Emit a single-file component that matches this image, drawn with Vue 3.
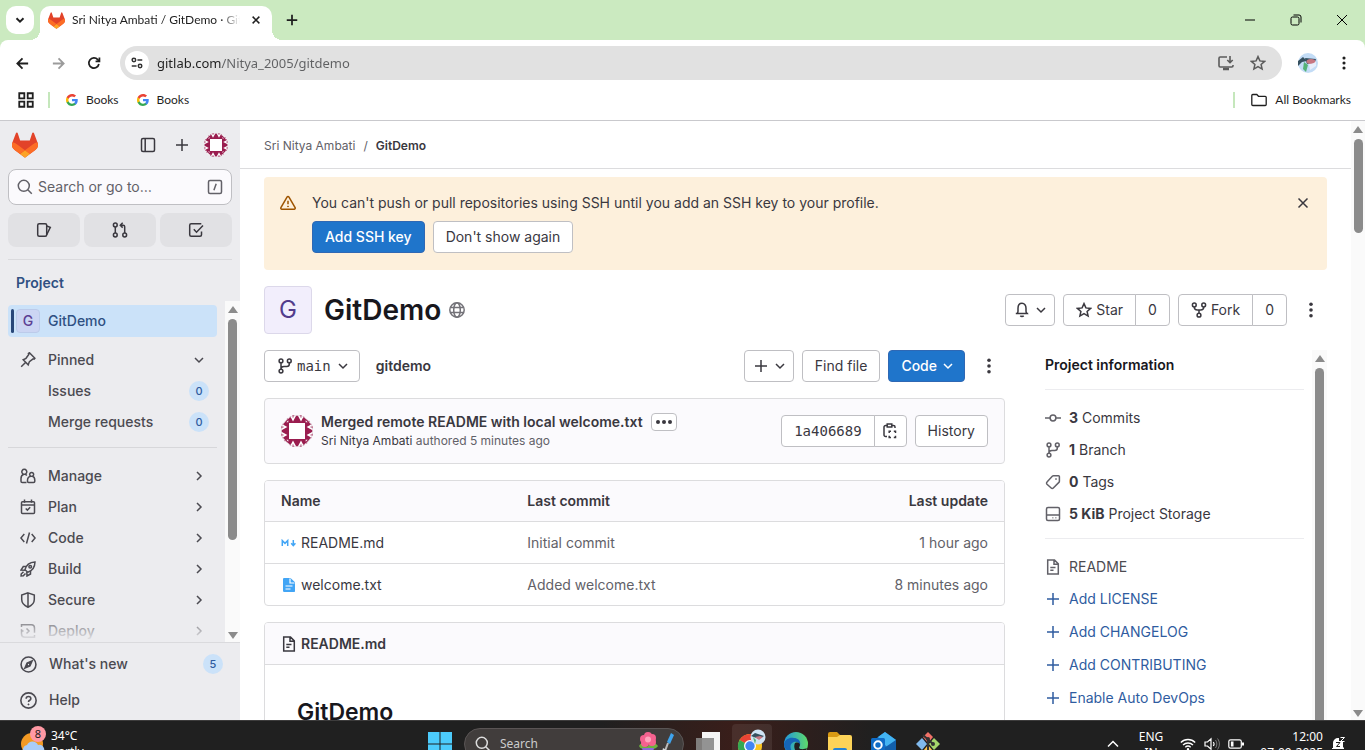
<script setup>
import { h } from 'vue'

const glyphs = {
  chevronDown: '<path d="m4 6 4 4 4-4"/>',
  chevronRight: '<path d="m6 4 4 4-4 4"/>',
  chevronUp: '<path d="m3 10.500 5-5 5 5"/>',
  close: '<path d="m3.500 3.500 9 9m0-9-9 9"/>',
  plus: '<path d="M8 2v12M2 8h12"/>',
  back: '<path d="M14 8H2.500M8 2.500 2.500 8 8 13.500"/>',
  forward: '<path d="M2 8h11.500M8 2.500 13.500 8 8 13.500"/>',
  reload: '<path d="M13.600 9.200A5.800 5.800 0 1 1 12.300 4.200L14 6"/><path d="M14.200 1.800V6.200H9.800"/>',
  tune: '<path d="M1.500 4.500h.1M8.500 4.500H14M2 11.500h5.500"/><circle cx="4.500" cy="4.500" r="2"/><circle cx="11.500" cy="11.500" r="2"/>',
  install: '<path d="M9 2H2.200C1.500 2 1 2.500 1 3.200v7.600c0 .7.500 1.200 1.200 1.200h11.600c.7 0 1.200-.5 1.200-1.200V10M12 1v6.500M9.300 5 12 7.700 14.700 5"/><path d="M5 14h6" stroke-width="2.500"/>',
  star: '<path d="m8 1.600 1.900 4.300 4.700.5-3.500 3.100 1 4.600L8 11.700l-4.100 2.400 1-4.600-3.500-3.100 4.700-.5z"/>',
  grid: '<path d="M2 2h4.500v4.500H2zM9.500 2H14v4.500H9.500zM2 9.500h4.500V14H2zM9.500 9.500H14V14H9.500z"/>',
  folder: '<path d="M.8 3.500c0-.6.4-1 1-1h4l1.700 1.800h6.700c.6 0 1 .4 1 1v7.200c0 .6-.4 1-1 1H1.800c-.6 0-1-.4-1-1z"/>',
  kebab: '<g fill="currentColor" stroke="none"><circle cx="8" cy="2.300" r="1.800"/><circle cx="8" cy="8" r="1.800"/><circle cx="8" cy="13.700" r="1.800"/></g>',
  ellipsis: '<g fill="currentColor" stroke="none"><circle cx="2" cy="8" r="2"/><circle cx="8" cy="8" r="2"/><circle cx="14" cy="8" r="2"/></g>',
  minimize: '<path d="M3 8h10" stroke-width="1"/>',
  restore: '<rect x="3" y="5" width="8" height="8" rx="1.500" stroke-width="1"/><path d="M5.500 3h5.500a2 2 0 0 1 2 2v5.500" stroke-width="1"/>',
  closeThin: '<path d="m3 3 10 10M13 3 3 13" stroke-width="1"/>',
  panel: '<rect x="1.500" y="1.500" width="13" height="13" rx="1.500"/><path d="M5.200 1.500v13"/>',
  search: '<circle cx="6.800" cy="6.800" r="5.500"/><path d="m10.800 10.800 4 4"/>',
  slash: '<rect x="1.500" y="1.500" width="13" height="13" rx="1.500"/><path d="m9.200 4.800-2.300 6.400"/>',
  issues: '<rect x="1.700" y="1.700" width="9" height="12.600" rx="1.500"/><path d="m10.700 4 3.600 1.300-3.600 7.500"/>',
  merge: '<circle cx="3.300" cy="3" r="1.900"/><circle cx="3.300" cy="13" r="1.900"/><circle cx="12.700" cy="13" r="1.900"/><path d="M3.300 5v6M9 3.200h2.200c.8 0 1.500.7 1.500 1.500V11M10.700.8 8.300 3.200l2.400 2.400"/>',
  todo: '<path d="M13.500 9.500v3.300c0 .8-.6 1.500-1.500 1.500H3.200c-.8 0-1.500-.7-1.500-1.500V3.200c0-.9.700-1.500 1.500-1.500h10.100"/><path d="m5.800 7.300 2.700 2.900 6.500-6.700"/>',
  pin: '<path d="M1.200 14.800 5.500 10.500M3.200 7.800l5 5 1.200-3.200 3.700-2.800 1 .4.800-1-5.500-5.500-1 .8.400 1L6 6.300z"/>',
  manage: '<path d="M4.800 6.300a2.500 2.500 0 1 0-1 0C2 7 1 8.600 1 10.500v2.700c0 .7.600 1.300 1.300 1.300h4.200M4.800 6.300c.8.200 1.500.6 2 1.200"/><path d="M12.300 8.300a2 2 0 1 0-1.300 0c-2 .3-3.500 1.900-3.500 4v1c0 .7.500 1.200 1.200 1.200h4.800c.8 0 1.300-.5 1.300-1.200v-1c0-2-1-3.700-2.500-4z"/>',
  plan: '<rect x="1.500" y="2.700" width="13" height="11.800" rx="1"/><path d="M1.500 6h13M4.500.5v3.300M11.500.5v3.300M5.700 9.500l1.700 1.600 2.800-2.800"/>',
  code: '<path d="M4.300 4 .9 8l3.400 4M11.700 4l3.400 4-3.400 4M9.500 2.500l-3 11"/>',
  rocket: '<path d="M5 8.700C6 4.500 9.500 1.300 15 1c-.2 5.500-3 9-7.200 10.200z"/><path d="M6 5.500H3.300L1 9l4 .2M10.500 10v3L7 15l-.2-4"/><path d="M3.500 10.800 1.200 13l-.1 1.900 2.200-.2 2.200-2.200"/><circle cx="10.200" cy="5.800" r="1.300"/>',
  shield: '<path d="M8 .9 14.300 3v4.500c0 3.300-2.500 6-6.300 7.700-3.800-1.700-6.300-4.400-6.300-7.700V3zM8 1v14"/>',
  deploy: '<path d="M1.500 4V1.700h9.800c1.800 0 3.200 1.400 3.200 3.200v4.800M14.500 12v2.300H4.700c-1.800 0-3.200-1.400-3.200-3.200V6.300M6.500 5.500 9 8l-2.500 2.500M1.500 8h2"/>',
  compass: '<circle cx="8" cy="8" r="7"/><path d="m11.300 4.700-4.600 2-2 4.600 4.600-2z" fill="currentColor"/><circle cx="8" cy="8" r=".6" fill="#ececef" stroke="none"/>',
  help: '<circle cx="8" cy="8" r="7.200"/><path d="M5.800 6.300c0-1.200 1-2 2.200-2s2.200.8 2.200 2C10.200 7.800 8 7.700 8 9.300"/><circle cx="8" cy="11.700" r=".6" fill="currentColor" stroke-width=".6"/>',
  warning: '<path d="M7 2.200.9 12.700c-.4.700.1 1.500.9 1.500h12.400c.8 0 1.300-.8.900-1.500L9 2.200a1.150 1.150 0 0 0-2 0zM8 5.800v3.500"/><circle cx="8" cy="11.400" r=".5" fill="currentColor" stroke-width=".8"/>',
  globe: '<circle cx="8" cy="8" r="7.200"/><ellipse cx="8" cy="8" rx="3.300" ry="7.200"/><path d="M1.500 5.500h13M1.500 10.500h13"/>',
  bell: '<path d="M3 11.500h10c-.6-.7-1-1.300-1-2.300V6.300C12 3.500 10.500 1.300 8 1.300S4 3.500 4 6.300v2.900c0 1-.4 1.600-1 2.300H1.800h12.400M6.300 13.800c.8.900 2.600.9 3.400 0"/>',
  fork: '<circle cx="3.300" cy="3" r="1.900"/><circle cx="12.700" cy="3" r="1.900"/><circle cx="8" cy="13.200" r="1.900"/><path d="M3.300 5c0 2.200 1 3 3 3h3.400c2 0 3-.8 3-3M8 8v3.200"/>',
  branch: '<circle cx="4" cy="2.900" r="1.900"/><circle cx="12.300" cy="2.900" r="1.900"/><circle cx="4" cy="13.100" r="1.900"/><path d="M4 5v6M12.300 5v1c0 1.700-.8 2.500-2.500 2.500H7C5.300 8.500 4 9.300 4 11"/>',
  copy: '<path d="M5 13.500H3.500C2.700 13.500 2 12.800 2 12V4c0-.8.700-1.500 1.500-1.500H5m5 0h1.500c.8 0 1.500.7 1.500 1.500v1"/><path d="M5.200 1h4.600v3H5.200z"/><path d="M7.200 10V8.200H9M11.800 8.200h1.700V10M13.500 12.800v1.700h-1.700M9 14.500H7.200v-1.700"/>',
  commit: '<circle cx="8" cy="8" r="2.900"/><path d="M0 8h5M11 8h5"/>',
  tag: '<path d="M8.500 1.700h5c.5 0 .9.400.9.900v4.600c0 .5-.2.900-.5 1.200l-5.600 5.600c-.6.600-1.500.6-2.100 0L2 10.200c-.6-.6-.6-1.500 0-2.100l5.300-5.900c.3-.3.700-.5 1.200-.5z"/><circle cx="11" cy="5" r=".6" fill="currentColor" stroke-width=".6"/>',
  disk: '<rect x="1.500" y="1.500" width="13" height="13" rx="1.500"/><path d="M1.500 9h13M7.500 11.800h.8M10.500 11.800h.8"/>',
  doc: '<path d="M2.700 1h6.800l3.800 3.900V15H2.700zM9 1.200v4h4M5.300 8.500h5.200M5.300 11.300h3.200"/>',
  markdown: '<path d="M1.300 11V5.500L4 8.300l2.700-2.800V11M12.300 5v5M10.200 8.300l2.100 2.400 2.100-2.400"/>',
  file: '<path d="M3.500 1h6L14 5.300V14c0 .6-.4 1-1 1H3.500c-.8 0-1.500-.5-1.500-1V2c0-.6.700-1 1.500-1z" fill="currentColor" stroke="none"/><path d="M9 1.500V6h4.500M4.500 9h7M4.500 12h5" stroke="#fff" stroke-width="1.200"/>',
  wifi: '<path d="M.8 6.500c4-4 10.400-4 14.400 0M3 9c2.800-2.700 7.200-2.700 10 0M5.300 11.300c1.600-1.500 3.800-1.500 5.400 0" stroke-width="1.300"/><circle cx="8" cy="13.300" r="1.200" fill="currentColor" stroke="none"/>',
  volume: '<path d="M1 6h2.500L7 2.800v10.400L3.500 10H1zM9.300 6c.9 1.200.9 2.800 0 4" stroke-width="1.200"/><path d="M11.500 4c1.800 2.400 1.800 5.600 0 8M13.500 2.500c2.500 3.300 2.500 7.700 0 11" stroke-width="1" opacity=".4"/>',
  battery: '<rect x=".8" y="3.800" width="12.500" height="8.400" rx="1.800" stroke-width="1.200"/><path d="M15 6.500v3M4.200 5.600v4.800" stroke-width="2.600"/>',
}

function Icon({ name, size = 16, weight = 1.5 }) {
  return h('svg', {
    viewBox: '0 0 16 16', width: size, height: size, fill: 'none', stroke: 'currentColor',
    'stroke-width': weight, 'aria-hidden': 'true', innerHTML: glyphs[name],
  })
}
Icon.props = ['name', 'size', 'weight']

function Tanuki({ size = 25 }) {
  return h('svg', {
    viewBox: '0 0 25 24', width: size, height: size, 'aria-hidden': 'true',
    innerHTML: '<path d="m24.507 9.500-.034-.09L21.082.562a.896.896 0 0 0-1.694.091l-2.290 7.010H7.825L5.535.653a.898.898 0 0 0-1.694-.09L.451 9.411.416 9.500a6.297 6.297 0 0 0 2.090 7.278l.012.010.030.022 5.160 3.867 2.560 1.935 1.554 1.176a1.051 1.051 0 0 0 1.268 0l1.555-1.176 2.560-1.935 5.197-3.890.014-.010A6.297 6.297 0 0 0 24.507 9.500Z" fill="#E24329"/><path d="m24.507 9.500-.034-.09a11.440 11.440 0 0 0-4.560 2.051l-7.447 5.632 4.742 3.584 5.197-3.890.014-.010A6.297 6.297 0 0 0 24.507 9.500Z" fill="#FC6D26"/><path d="m7.707 20.677 2.560 1.935 1.555 1.176a1.051 1.051 0 0 0 1.268 0l1.555-1.176 2.560-1.935-4.743-3.584-4.755 3.584Z" fill="#FCA326"/><path d="M5.010 11.461a11.430 11.430 0 0 0-4.560-2.050L.416 9.500a6.297 6.297 0 0 0 2.090 7.278l.012.010.030.022 5.160 3.867 4.745-3.584-7.444-5.632Z" fill="#FC6D26"/>',
  })
}
Tanuki.props = ['size']

function Google() {
  return h('svg', {
    viewBox: '0 0 48 48', width: 12, height: 12, 'aria-hidden': 'true',
    innerHTML: '<path fill="#4285F4" d="M47 24.500c0-1.600-.1-3.200-.4-4.700H24v9h12.900c-.6 3-2.300 5.500-4.800 7.200v6h7.700C44.400 37.800 47 31.700 47 24.500z"/><path fill="#34A853" d="M24 48c6.500 0 11.900-2.100 15.900-5.800l-7.800-6c-2.100 1.500-4.900 2.300-8.100 2.300-6.300 0-11.600-4.200-13.500-9.900H2.600v6.200C6.500 42.600 14.600 48 24 48z"/><path fill="#FBBC05" d="M10.500 28.600a14 14 0 0 1 0-9.200v-6.200H2.600a24 24 0 0 0 0 21.600z"/><path fill="#EA4335" d="M24 9.500c3.500 0 6.700 1.200 9.200 3.600l6.900-6.900C35.900 2.400 30.500 0 24 0 14.600 0 6.500 5.400 2.600 13.200l7.900 6.200C12.400 13.700 17.700 9.500 24 9.500z"/>',
  })
}

const corner = '<path d="M6 2v4H2zM3.500 2.500 5 1.500 5 4z" fill="#9a1d4f"/><path d="M5.500 4v1.500H4z" fill="#fff"/>'
const edge = '<rect width="6" height="6" fill="#9a1d4f"/><path d="M.4 0h5.200L3 4.800z" fill="#fff"/><path d="M1.900 0h2.200L3 2.200z" fill="#9a1d4f"/>'
function Identicon({ size = 24 }) {
  const cells = [0, 90, 180, 270].map(a =>
    `<g transform="rotate(${a} 12 12)">${corner}<g transform="translate(6 0)">${edge}</g><g transform="translate(12 0)">${edge}</g></g>`).join('')
  return h('svg', {
    viewBox: '0 0 24 24', width: size, height: size, class: 'identicon', 'aria-hidden': 'true',
    innerHTML: `<rect width="24" height="24" fill="#fff"/>${cells}<circle cx="12" cy="12" r="11.700" fill="none" stroke="#e4dfe3" stroke-width=".6"/>`,
  })
}
Identicon.props = ['size']

const sections = [
  ['manage', 'Manage'], ['plan', 'Plan'], ['code', 'Code'],
  ['rocket', 'Build'], ['shield', 'Secure'], ['deploy', 'Deploy'],
]
const files = [
  { icon: 'markdown', name: 'README.md', commit: 'Initial commit', when: '1 hour ago' },
  { icon: 'file', name: 'welcome.txt', commit: 'Added welcome.txt', when: '8 minutes ago' },
]
const stats = [
  ['commit', '3', 'Commits'], ['branch', '1', 'Branch'], ['tag', '0', 'Tags'], ['disk', '5 KiB', 'Project Storage'],
]
const additions = ['Add LICENSE', 'Add CHANGELOG', 'Add CONTRIBUTING', 'Enable Auto DevOps']
</script>

<template>
  <div class="desktop">
    <header class="browser">
      <div class="tabstrip">
        <button class="tab-search" aria-label="Search tabs"><Icon name="chevronDown" :size="14" :weight="2.2" /></button>
        <div class="tab">
          <Tanuki :size="17" />
          <span class="tab-title">Sri Nitya Ambati / GitDemo · GitLab</span>
          <button aria-label="Close tab"><Icon name="close" :size="12" :weight="2" /></button>
        </div>
        <button class="new-tab" aria-label="New tab"><Icon name="plus" :size="14" :weight="2" /></button>
        <div class="window-buttons">
          <button aria-label="Minimize"><Icon name="minimize" /></button>
          <button aria-label="Restore"><Icon name="restore" /></button>
          <button aria-label="Close window"><Icon name="closeThin" /></button>
        </div>
      </div>
      <div class="chrome">
        <div class="toolbar">
          <button aria-label="Back"><Icon name="back" :size="15" :weight="1.9" /></button>
          <button class="dim" aria-label="Forward"><Icon name="forward" :size="15" :weight="1.9" /></button>
          <button aria-label="Reload"><Icon name="reload" :size="14" :weight="2" /></button>
          <div class="omnibox">
            <button class="site-info" aria-label="Site information"><Icon name="tune" :size="14" :weight="1.7" /></button>
            <input type="text" value="gitlab.com/Nitya_2005/gitdemo" aria-label="Address" />
            <button aria-label="Install app"><Icon name="install" :weight="1.6" /></button>
            <button aria-label="Bookmark this page"><Icon name="star" /></button>
          </div>
          <button class="profile" aria-label="Profile">
            <svg viewBox="0 0 20 20" width="20" height="20"><circle cx="10" cy="10" r="10" fill="#c3dcf6" /><path d="M0 8 5 4l4 4-5 1-4 4zM7 5l11 1-1 3-8 2z" fill="#35505f" /><ellipse cx="13" cy="8.500" rx="4.500" ry="2.500" fill="#c87782" /><path d="m6 9 4 3-2 7-3-3z" fill="#54b277" /><path d="M11 11c3 0 6-1 7-3v5l-6 4z" fill="#e8eefb" /></svg>
          </button>
          <button aria-label="Browser menu"><Icon name="kebab" :size="14" /></button>
        </div>
        <nav class="bookmarks" aria-label="Bookmarks">
          <button aria-label="Apps"><Icon name="grid" :size="18" :weight="1.6" /></button>
          <span class="rule"></span>
          <a href="#"><Google />Books</a>
          <a href="#"><Google />Books</a>
          <span class="rule last"></span>
          <a href="#" class="all"><Icon name="folder" :weight="1.3" />All Bookmarks</a>
        </nav>
      </div>
    </header>

    <div class="page">
      <aside class="sidebar">
        <div class="side-top">
          <a href="#" class="logo" aria-label="GitLab home"><Tanuki :size="26" /></a>
          <button aria-label="Collapse sidebar"><Icon name="panel" /></button>
          <button aria-label="Create new"><Icon name="plus" :size="16" /></button>
          <button aria-label="Your profile"><Identicon :size="24" /></button>
        </div>
        <button class="side-search"><Icon name="search" /><span>Search or go to…</span><Icon name="slash" /></button>
        <div class="shortcuts">
          <a href="#" aria-label="Issues"><Icon name="issues" /></a>
          <a href="#" aria-label="Merge requests"><Icon name="merge" /></a>
          <a href="#" aria-label="To-do list"><Icon name="todo" /></a>
        </div>
        <h2>Project</h2>
        <div class="side-scroll">
          <nav class="side-nav" aria-label="Project">
            <a href="#" class="current"><span class="letter">G</span>GitDemo</a>
            <a href="#"><Icon name="pin" /><span>Pinned</span><Icon name="chevronDown" /></a>
            <a href="#" class="sub"><span>Issues</span><b class="badge">0</b></a>
            <a href="#" class="sub"><span>Merge requests</span><b class="badge">0</b></a>
            <hr />
            <a v-for="[icon, label] in sections" :key="label" href="#"><Icon :name="icon" /><span>{{ label }}</span><Icon name="chevronRight" /></a>
          </nav>
          <div class="scrollbar side-bar" aria-hidden="true"><i class="up"></i><i class="thumb"></i><i class="rest"></i><i class="down"></i></div>
        </div>
        <div class="side-foot">
          <a href="#"><Icon name="compass" :size="17" /><span>What's new</span><b class="badge">5</b></a>
          <a href="#"><Icon name="help" :size="17" /><span>Help</span></a>
        </div>
      </aside>

      <div class="content">
        <nav class="crumbs" aria-label="Breadcrumb"><a href="#">Sri Nitya Ambati</a><span>/</span><a href="#" class="here">GitDemo</a></nav>
        <main>
          <section class="alert">
            <Icon name="warning" />
            <div>
              <p>You can't push or pull repositories using SSH until you add an SSH key to your profile.</p>
              <div class="row">
                <button class="btn primary">Add SSH key</button>
                <button class="btn">Don't show again</button>
              </div>
            </div>
            <button class="dismiss" aria-label="Dismiss"><Icon name="close" /></button>
          </section>

          <div class="title row">
            <span class="big-letter">G</span>
            <h1>GitDemo</h1>
            <Icon name="globe" />
            <span class="grow"></span>
            <button class="btn tight" aria-label="Notifications"><Icon name="bell" /><Icon name="chevronDown" /></button>
            <div class="pair"><button class="btn"><Icon name="star" />Star</button><a href="#" class="btn">0</a></div>
            <div class="pair"><button class="btn"><Icon name="fork" />Fork</button><a href="#" class="btn">0</a></div>
            <button class="more" aria-label="More actions"><Icon name="kebab" /></button>
          </div>

          <div class="columns">
            <div class="left">
              <div class="row tree-bar">
                <button class="btn mono"><Icon name="branch" />main<Icon name="chevronDown" /></button>
                <a href="#" class="path">gitdemo</a>
                <span class="grow"></span>
                <button class="btn tight" aria-label="Add"><Icon name="plus" /><Icon name="chevronDown" /></button>
                <button class="btn">Find file</button>
                <button class="btn primary code">Code<Icon name="chevronDown" /></button>
                <button class="more" aria-label="More"><Icon name="kebab" /></button>
              </div>

              <section class="card commit">
                <Identicon :size="32" />
                <div class="grow">
                  <div class="row"><a href="#" class="message">Merged remote README with local welcome.txt</a><button class="expand" aria-label="Toggle commit description"><Icon name="ellipsis" /></button></div>
                  <p><a href="#">Sri Nitya Ambati</a> authored 5 minutes ago</p>
                </div>
                <div class="pair"><a href="#" class="btn mono">1a406689</a><button class="btn copy" aria-label="Copy commit SHA"><Icon name="copy" /></button></div>
                <a href="#" class="btn">History</a>
              </section>

              <div class="card">
                <table>
                  <thead><tr><th>Name</th><th>Last commit</th><th>Last update</th></tr></thead>
                  <tbody>
                    <tr v-for="f in files" :key="f.name">
                      <td><a href="#" :class="f.icon"><Icon :name="f.icon" />{{ f.name }}</a></td>
                      <td>{{ f.commit }}</td>
                      <td>{{ f.when }}</td>
                    </tr>
                  </tbody>
                </table>
              </div>

              <article class="card readme">
                <header><Icon name="doc" /><a href="#">README.md</a></header>
                <h2>GitDemo</h2>
              </article>
            </div>

            <aside class="info">
              <h2>Project information</h2>
              <ul class="stats">
                <li v-for="[icon, n, label] in stats" :key="label"><Icon :name="icon" /><a href="#"><strong>{{ n }}</strong> {{ label }}</a></li>
              </ul>
              <ul class="adds">
                <li class="dark"><Icon name="doc" /><a href="#">README</a></li>
                <li v-for="label in additions" :key="label"><Icon name="plus" /><a href="#">{{ label }}</a></li>
              </ul>
            </aside>
            <div class="scrollbar info-bar" aria-hidden="true"><i class="up"></i><i class="thumb"></i></div>
          </div>
        </main>
      </div>
      <div class="scrollbar page-bar" aria-hidden="true"><i class="up"></i><i class="thumb"></i><i class="rest"></i><i class="down"></i></div>
    </div>

    <footer class="taskbar">
      <button class="weather">
        <span class="sun">
          <svg viewBox="0 0 26 26" width="26" height="26"><circle cx="12" cy="13" r="11" fill="#f39a24" /><path d="M5 23a5 5 0 0 1 2-9 6 6 0 0 1 11 0 5 5 0 0 1 4 9z" fill="#a9cdf8" /></svg>
          <b>8</b>
        </span>
        <span>34°C<br />Partly</span>
      </button>
      <div class="apps">
        <button aria-label="Start"><svg viewBox="0 0 24 24" width="24" height="24"><path d="M0 0h11.500v11.500H0zM12.500 0H24v11.500H12.500zM0 12.500h11.500V24H0zM12.500 12.500H24V24H12.500z" fill="#4ccbfb" /></svg></button>
        <label class="task-search">
          <Icon name="search" />
          <input type="text" placeholder="Search" aria-label="Search Windows" />
          <svg viewBox="0 0 40 26" width="40" height="26"><path d="M2 15c2-4 5-3 8 1 4-5 8-5 11-1-2 3-5 3-7 3H7c-3 0-4-1-5-3z" fill="#6db13f" /><path d="M5 17h12l-2 9H7z" fill="#8b68d9" /><g fill="#f5628f"><circle cx="7" cy="8" r="4" /><circle cx="15" cy="7" r="4" /><circle cx="11" cy="5" r="4" /><circle cx="8" cy="12" r="4" /><circle cx="15" cy="11" r="4" /></g><circle cx="11" cy="8.500" r="3" fill="#ffa5bd" /><path d="m34 2 3 2-4 9-3-2z" fill="#3fa4ee" /><path d="m31 12-3 8" stroke="#bbb" stroke-width="2" /><path d="m26 17 5 3-4 6h-3z" fill="#d5d8dc" /></svg>
        </label>
        <button aria-label="Task view"><svg viewBox="0 0 24 24" width="24" height="24"><rect x="6" width="18" height="18" fill="#f4f4f4" /><rect y="6" width="18" height="18" fill="#888" opacity=".9" /></svg></button>
        <button class="active" aria-label="Chrome">
          <svg viewBox="0 0 30 30" width="30" height="30"><circle cx="13" cy="17" r="12" fill="#fbc51f" /><path d="M13 17 2.600 11A12 12 0 0 1 23.400 11z" fill="#e94335" /><path d="M13 17 2.600 11A12 12 0 0 0 13 29l5-9z" fill="#34a853" /><circle cx="13" cy="17" r="6" fill="#fff" /><circle cx="13" cy="17" r="4.700" fill="#4285f4" /><circle cx="21" cy="8" r="7.500" fill="#d0e4f5" /><path d="m14 7 4-3 9 3-5 3z" fill="#35505f" /><path d="m18 8 5-1 3 1-4 3z" fill="#c87782" /><path d="m16 8 3 3-1 4z" fill="#54b277" /></svg>
        </button>
        <button aria-label="Edge"><svg viewBox="0 0 24 24" width="24" height="24"><defs><linearGradient id="edge"><stop stop-color="#2196df" /><stop offset="1" stop-color="#5edb6a" /></linearGradient></defs><circle cx="12" cy="12" r="12" fill="url(#edge)" /><path d="M0 12c1-5 6-7 10-6 4 0 7 3 6 7-1-2-3-4-6-3-4 1-5 6-1 11-5-1-9-4-9-9z" fill="#1565b8" /><path d="M11 11c3-1 5 0 5 2l-1 3c2 2 6 1 8 0-3 7-10 9-12 2-1-3-1-5 0-7z" fill="#202020" /></svg></button>
        <button aria-label="File Explorer"><svg viewBox="0 0 24 24" width="24" height="24"><path d="M0 2a2 2 0 0 1 2-2h7l3 3v5H0z" fill="#d99a13" /><path d="M0 5h9l3-2h10a2 2 0 0 1 2 2v17H0z" fill="#fdd358" /><path d="M5 24v-6a2 2 0 0 1 2-2h10a2 2 0 0 1 2 2v6z" fill="#2583d4" /></svg></button>
        <button aria-label="Outlook"><svg viewBox="0 0 26 24" width="26" height="24"><path d="M3 8 14 0l11 8v16H3z" fill="#1b72c9" /><path d="m7 5 7-5 11 8-9 7z" fill="#43b4f2" /><path d="m25 8-12 8v8h12z" fill="#1260ac" /><rect y="6" width="14" height="14" rx="1.500" fill="#0f6cc6" /><circle cx="7" cy="13" r="3.700" fill="none" stroke="#fff" stroke-width="2" /></svg></button>
        <button aria-label="Git"><svg viewBox="0 0 24 24" width="24" height="24"><path d="m12 0 5 5-5 6-5-6z" fill="#f27268" /><path d="m6 6 5 6-5 6-6-6z" fill="#80b9ed" /><path d="m18 6 6 6-6 6-5-6z" fill="#a5d66c" /><path d="m12 13 5 6-5 5-5-5z" fill="#f5c04d" /><path d="m7 3 10 9M12 7v12" stroke="#333" stroke-width="2" /><circle cx="12" cy="7" r="2" fill="#333" /><circle cx="17" cy="12" r="2" fill="#333" /></svg></button>
      </div>
      <div class="tray">
        <button aria-label="Hidden icons"><Icon name="chevronUp" /></button>
        <button class="lang">ENG<br />IN</button>
        <button class="status" aria-label="Network, volume and battery"><Icon name="wifi" /><Icon name="volume" /><Icon name="battery" /></button>
        <button class="clock">12:00<br />07-09-2025</button>
        <button aria-label="Notifications, do not disturb"><svg viewBox="0 0 16 16" width="16" height="16"><path d="M2 12V7a5 5 0 0 1 5-5h1v3h4v6l1 1v1H1v-1zM5 14h4v1H5z" fill="#fff" /><path d="M9.500 1.500h4l-4 4h4M5.500 7h3l-3 3.500h3" fill="none" stroke="#fff" /><path d="M5 6.500h4L5.500 10.500H9" fill="none" stroke="#202020" /></svg></button>
      </div>
    </footer>
  </div>
</template>

<style>
body { margin: 0; overflow: hidden; }
</style>

<style scoped>
* { box-sizing: border-box; }
.desktop { display: flex; flex-direction: column; height: 100vh; overflow: hidden; background: #fff; color: #3a383f; font: 14px/20px Inter, "Liberation Sans", sans-serif; }
button { display: inline-flex; align-items: center; justify-content: center; padding: 0; border: 0; background: none; color: inherit; font: inherit; white-space: nowrap; }
a { color: inherit; text-decoration: none; }
svg { display: block; flex: none; }
h1, h2, p, ul { margin: 0; padding: 0; }
ul { list-style: none; }
.row { display: flex; align-items: center; }
.grow { flex: 1; min-width: 0; }
.identicon { border-radius: 50%; }

.browser { flex: none; font: 12px/16px Lato, "Open Sans", sans-serif; color: #1f1f1f; background: #cbeac0; }
.tabstrip { display: flex; align-items: flex-end; height: 40px; padding-left: 6px; }
.tab-search { width: 28px; height: 28px; margin: 0 6px 6px 0; border-radius: 10px; background: #fff; }
.tab { position: relative; display: flex; align-items: center; gap: 7px; width: 232px; height: 34px; padding: 0 10px 6px 8px; border-radius: 10px 10px 0 0; background: #fff; }
.tab::before, .tab::after { content: ""; position: absolute; bottom: 0; width: 10px; height: 10px; }
.tab::before { right: 100%; background: radial-gradient(circle at 0 0, transparent 10px, #fff 10px); }
.tab::after { left: 100%; background: radial-gradient(circle at 100% 0, transparent 10px, #fff 10px); }
.tab-title { flex: 1; overflow: hidden; white-space: nowrap; mask-image: linear-gradient(90deg, #000 148px, transparent 168px); }
.new-tab { width: 28px; height: 28px; margin: 0 6px 6px; }
.window-buttons { display: flex; height: 40px; margin-left: auto; color: #000; }
.window-buttons button { width: 46px; }
.chrome { border-radius: 8px 8px 0 0; border-bottom: 1px solid #c9c9cd; background: #fff; }
.toolbar { display: flex; align-items: center; height: 46px; padding: 0 3px 0 4px; }
.toolbar > button { width: 36px; height: 36px; }
.dim { color: #9b9b9b; }
.omnibox { display: flex; flex: 1; align-items: center; height: 34px; margin: 0 8px; padding: 0 8px 0 5px; border-radius: 17px; background: #e1e1e1; color: #5b5b5b; }
.omnibox > button { width: 32px; height: 32px; }
.omnibox > .site-info { width: 24px; height: 24px; margin-right: 8px; border-radius: 50%; background: #fff; color: #333; }
.omnibox input { flex: 1; min-width: 0; padding: 0; border: 0; outline: 0; background: linear-gradient(90deg, #1f1f1f 65px, #5f6062 65px); background-clip: text; color: transparent; font: 13px/20px "Noto Sans", "Open Sans", sans-serif; }
.bookmarks { display: flex; align-items: center; height: 34px; padding: 0 14px 6px 17px; }
.bookmarks a { display: flex; align-items: center; gap: 8px; margin-right: 18px; }
.bookmarks .all { gap: 8px; margin: 0; }
.rule { width: 2px; height: 16px; margin: 0 16px 0 13px; background: #c5e7bc; }
.rule.last { margin-left: auto; }

.page { display: flex; flex: 1; min-height: 0; }
.sidebar { display: flex; flex-direction: column; flex: none; width: 240px; background: #ececef; }
.side-top { display: flex; align-items: center; justify-content: flex-end; gap: 10px; padding: 11px 12px; }
.side-top .logo { margin-right: auto; }
.side-top button { width: 24px; height: 24px; }
.side-search { gap: 5px; height: 36px; margin: 0 8px; padding: 0 8px; border: 1px solid #bfbfc3; border-radius: 8px; background: #fbfafd; color: #626168; }
.side-search span { flex: 1; text-align: left; }
.shortcuts { display: flex; gap: 4px; margin: 8px 8px 0; padding-bottom: 12px; border-bottom: 1px solid #dadadd; }
.shortcuts a { display: flex; flex: 1; align-items: center; justify-content: center; height: 34px; border-radius: 8px; background: #e1e1e4; }
.sidebar h2 { padding: 13px 16px 8px; color: #2f5082; font-size: 14px; font-weight: 600; line-height: 20px; }
.side-scroll { position: relative; display: flex; flex: 1; min-height: 0; overflow: hidden; }
.side-scroll::after { content: ""; position: absolute; inset: auto 15px 0 0; height: 32px; background: linear-gradient(transparent, #ececef); }
.side-nav { flex: 1; padding: 4px 8px; }
.side-nav a { display: flex; align-items: center; gap: 12px; height: 31px; padding: 0 10px 0 12px; font-weight: 500; color: #4b4a51; }
.side-nav a > span { flex: 1; }
.side-nav a.sub { padding: 0 8px 0 40px; }
.side-nav a.current { position: relative; gap: 8px; height: 32px; margin-bottom: 7px; padding-left: 8px; border-radius: 4px; background: #cbe2f9; color: #2f5082; }
.current::before { content: ""; position: absolute; inset: 4px auto 4px 3px; width: 3px; border-radius: 2px; background: #284779; }
.side-nav a > .letter { flex: none; width: 24px; height: 24px; border: 1px solid #bccbea; border-radius: 4px; background: #ccd5f3; color: #5c3f93; line-height: 22px; text-align: center; }
.side-nav hr { margin: 10px 0 12px; border: 0; border-top: 1px solid #d7d7da; }
.badge { width: 20px; border-radius: 10px; background: #cbe2f9; color: #2f5ca0; font-size: 11px; font-weight: 500; line-height: 20px; text-align: center; }
.side-foot { padding: 3px 8px 2px; border-top: 1px solid #dadadd; }
.side-foot a { display: flex; align-items: center; gap: 12px; height: 36px; padding: 0 9px 0 12px; font-weight: 500; color: #4b4a51; }
.side-foot span { flex: 1; }

.scrollbar { display: flex; flex: none; flex-direction: column; align-items: center; width: 15px; padding: 5px 0 3px; background: #fafafa; }
.scrollbar .up, .scrollbar .down { border: 5px solid transparent; }
.scrollbar .up { margin-bottom: 6px; border-top: 0; border-bottom: 7px solid #8b8b8b; }
.scrollbar .down { border-bottom: 0; border-top: 7px solid #8b8b8b; }
.thumb { width: 9px; border-radius: 5px; background: #8b8b8b; }
.side-bar .thumb { flex: 221; }
.side-bar .rest { flex: 92; }
.page-bar { width: 14px; }
.page-bar .thumb { flex: 94; }
.page-bar .rest { flex: 476; }
.info-bar { padding-bottom: 0; }
.info-bar .thumb { flex: 1; border-radius: 5px 5px 0 0; }

.content { display: flex; flex: 1; flex-direction: column; min-width: 0; }
.crumbs { display: flex; gap: 8px; height: 48px; padding: 15px 24px; border-bottom: 1px solid #dcdcde; color: #626168; font-size: 12px; line-height: 20px; }
.here { color: #3a383f; font-weight: 600; }
main { display: flex; flex: 1; flex-direction: column; min-height: 0; padding: 8px 24px 0; }
.alert { display: flex; gap: 16px; flex: none; padding: 16px 16px 17px; border-radius: 4px; background: #fdf0dc; }
.alert > svg { margin-top: 2px; color: #9e5400; }
.alert > div { flex: 1; }
.alert .row { gap: 8px; margin-top: 8px; }
.dismiss { width: 16px; height: 20px; }
.btn { display: inline-flex; align-items: center; justify-content: center; gap: 4px; height: 32px; padding: 0 12px; border: 1px solid #bfbfc3; border-radius: 4px; background: #fff; white-space: nowrap; }
.btn.primary { border-color: #2f68b4; background: #1f75cb; color: #fff; font-weight: 500; }
.btn.tight { gap: 3px; padding: 0 5px 0 8px; }
.btn.code { gap: 3px; padding-right: 8px; }
.mono { font-family: "DejaVu Sans Mono", "Liberation Mono", monospace; }
.tree-bar .mono { padding-right: 8px; }
.pair { display: flex; }
.pair .btn:first-child { border-radius: 4px 0 0 4px; }
.pair .btn:last-child { margin-left: -1px; border-radius: 0 4px 4px 0; }
.pair .copy { width: 33px; padding: 0; }
.more { width: 32px; height: 32px; }
.title { flex: none; gap: 8px; margin: 16px 0; }
.title > svg { color: #737278; }
.big-letter { width: 48px; height: 48px; margin-right: 4px; border: 1px solid #dcd8ea; border-radius: 4px; background: #f2eefc; color: #533c8c; font-size: 24px; line-height: 46px; text-align: center; }
h1 { color: #18171d; font-size: 28px; font-weight: 600; line-height: 36px; }
.columns { display: flex; flex: 1; min-height: 0; }
.left { flex: 1; min-width: 0; overflow: hidden; }
.tree-bar { gap: 8px; }
.path { margin-left: 8px; font-weight: 600; }
.card { margin-top: 16px; border: 1px solid #dcdcde; border-radius: 4px; overflow: hidden; }
.commit { display: flex; align-items: center; gap: 8px; height: 66px; padding: 0 16px; background: #fbfafd; }
.commit .row { gap: 8px; }
.message { font-weight: 600; }
.commit p { color: #626168; font-size: 12px; line-height: 18px; }
.commit p a { color: #3a383f; }
.expand { width: 26px; height: 18px; border: 1px solid #bfbfc3; border-radius: 4px; background: #fff; }
table { width: 100%; border-collapse: collapse; table-layout: fixed; }
th, td { height: 42px; padding: 0 16px; color: #626168; text-align: left; }
td { padding-top: 2px; }
th { background: #fbfafd; color: #3a383f; font-weight: 600; height: 40px; }
tbody tr { border-top: 1px solid #dcdcde; }
th:last-child, td:last-child { text-align: right; }
td a { display: flex; align-items: center; gap: 4px; color: #3a383f; }
td svg { color: #42a5f5; }
.readme header { display: flex; align-items: center; gap: 4px; height: 42px; padding: 0 16px; border-bottom: 1px solid #dcdcde; background: #fbfafd; font-weight: 600; }
.readme h2 { padding: 32px; color: #18171d; font-size: 23px; font-weight: 600; line-height: 30px; }
.info { flex: none; width: 259px; margin: 0 8px 0 40px; overflow: hidden; }
.info h2 { padding: 5px 0 14px; color: #18171d; font-size: 14px; font-weight: 600; line-height: 20px; }
.info ul { border-top: 1px solid #ececef; }
.info li { display: flex; align-items: center; gap: 8px; }
.info svg { color: #626168; }
.stats { padding: 12px 0 8px; }
.stats li { height: 32px; }
.adds { padding-top: 12px; color: #2f5ca0; }
.adds li { height: 33px; }
.adds svg { color: #2f5ca0; }
.adds .dark { height: 31px; color: #4c4b51; }
.adds .dark svg { color: #626168; }

.taskbar { position: relative; display: flex; flex: none; justify-content: space-between; height: 30px; border-top: 1px solid #3d3c3c; background: linear-gradient(90deg, #202020 44%, #3a1e1a 54%, #202020 64%); color: #fff; font: 12px/16px "Noto Sans", "Open Sans", sans-serif; overflow: hidden; }
.weather { align-items: flex-start; gap: 5px; padding: 7px 0 0 20px; text-align: left; }
.sun { position: relative; margin-top: 3px; }
.sun b { position: absolute; top: -5px; left: 10px; width: 16px; border-radius: 8px; background: #ff99a4; color: #1b1b1b; font-size: 11px; font-weight: 400; line-height: 16px; text-align: center; }
.apps { position: absolute; top: 3px; left: 428px; display: flex; align-items: flex-start; gap: 12px; }
.apps > button { width: 32px; height: 40px; }
.apps > button:first-child { width: 24px; }
.apps > .active { width: 40px; margin: 0 -4px; border-radius: 4px; background: #ffffff14; }
.task-search { display: flex; align-items: center; gap: 9px; width: 220px; height: 32px; margin: 4px -4px 0 0; padding: 0 6px 0 10px; border: 1px solid #5a5555; border-radius: 16px; background: #413d3c; color: #ddd; }
.task-search input { flex: 1; min-width: 0; padding: 0; border: 0; outline: 0; background: none; color: #ddd; font: inherit; }
.task-search input::placeholder { color: #ccc; opacity: 1; }
.tray { display: flex; align-items: flex-start; margin-left: auto; padding: 8px 18px 0 0; }
.tray .lang { margin: 0 17px 0 18px; }
.status { gap: 8px; margin-right: 16px; padding-top: 7px; }
.clock { margin-right: 8px; text-align: right; }
.tray > button:first-child, .tray > button:last-child { padding-top: 7px; }
</style>
